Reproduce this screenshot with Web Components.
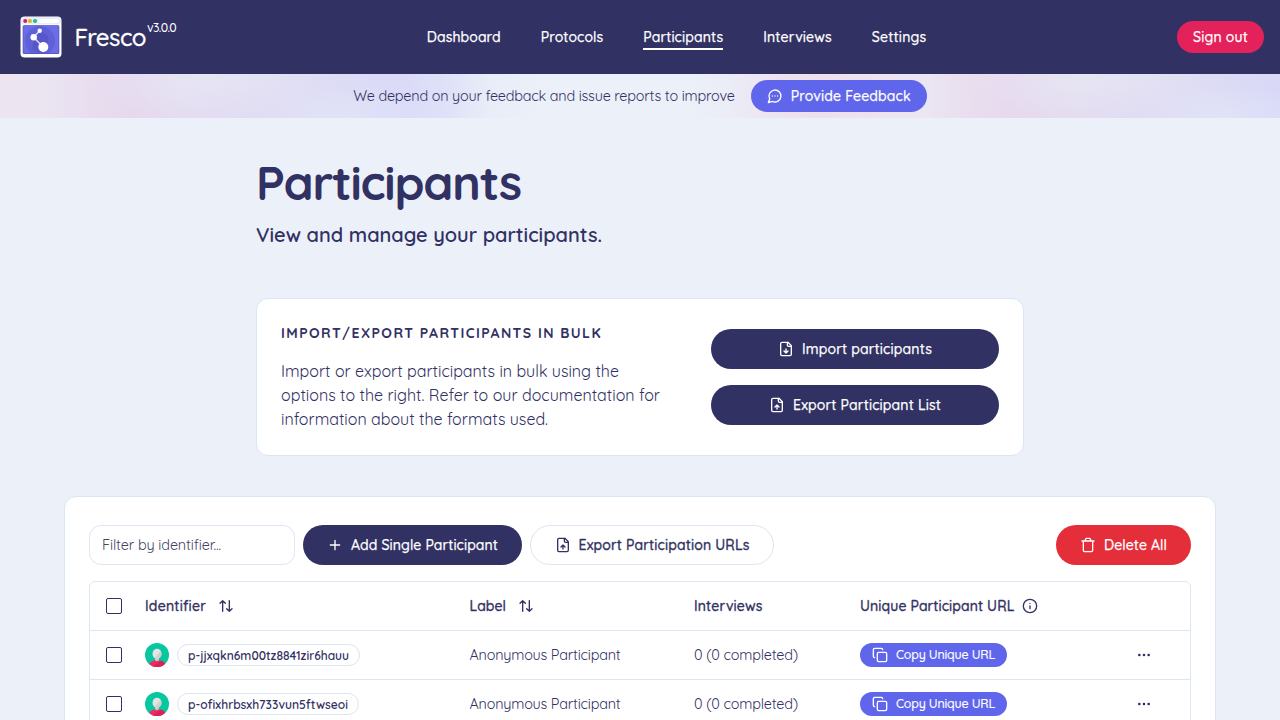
<!DOCTYPE html>
<html lang="en">
<head>
<meta charset="utf-8">
<title>Fresco - Participants</title>
<style>
html,body{margin:0;height:720px;overflow:hidden}
body{background:#ecf1f9;color:#323163;font-family:Quicksand,Lato,"Open Sans",sans-serif;font-size:14px;line-height:20px}
</style>
</head>
<body>
<fresco-app></fresco-app>
<script>
const define=(name,html,init)=>customElements.define(name,class extends HTMLElement{
  constructor(){super();this.attachShadow({mode:'open'});}
  connectedCallback(){
    if(this.ready)return;this.ready=true;
    this.shadowRoot.innerHTML=typeof html==='function'?html(this):html;
    if(init)init(this);
  }
});

const ICONS={
  chat:'<path d="M7.9 20A9 9 0 1 0 4 16.1L2 22Z"/><path d="M8 12h.01M12 12h.01M16 12h.01"/>',
  down:'<path d="M15 2H6a2 2 0 0 0-2 2v16a2 2 0 0 0 2 2h12a2 2 0 0 0 2-2V7Z"/><path d="M14 2v4a2 2 0 0 0 2 2h4M12 18v-6M9 15l3 3 3-3"/>',
  up:'<path d="M15 2H6a2 2 0 0 0-2 2v16a2 2 0 0 0 2 2h12a2 2 0 0 0 2-2V7Z"/><path d="M14 2v4a2 2 0 0 0 2 2h4M12 12v6M15 15l-3-3-3 3"/>',
  plus:'<path d="M5 12h14M12 5v14"/>',
  trash:'<path d="M3 6h18M19 6v14c0 1-1 2-2 2H7c-1 0-2-1-2-2V6M8 6V4c0-1 1-2 2-2h4c1 0 2 1 2 2v2"/>',
  sort:'<path d="m21 16-4 4-4-4M17 20V4M3 8l4-4 4 4M7 4v16"/>',
  info:'<circle cx="12" cy="12" r="10"/><path d="M12 16v-4M12 8h.01"/>',
  copy:'<rect width="14" height="14" x="8" y="8" rx="2"/><path d="M4 16c-1.100 0-2-.9-2-2V4c0-1.100.9-2 2-2h10c1.100 0 2 .9 2 2"/>',
  more:'<g fill="currentColor"><circle cx="5" cy="12" r="1"/><circle cx="12" cy="12" r="1"/><circle cx="19" cy="12" r="1"/></g>'
};
define('ui-icon',el=>`<style>:host{display:block;flex:none;width:16px;height:16px}svg{display:block;width:100%;height:100%}</style>
<svg viewBox="0 0 24 24" fill="none" stroke="currentColor" stroke-width="2" stroke-linecap="round" stroke-linejoin="round">${ICONS[el.getAttribute('name')]}</svg>`);

/* One line of text, tracked so that it spans the width given in "w". */
define('fit-text','<style>:host{display:block;flex:none;white-space:nowrap}span{display:inline-block}</style><span><slot></slot></span>',el=>{
  const w=+el.getAttribute('w'),s=el.shadowRoot.querySelector('span');
  el.style.width=w+'px';
  s.style.letterSpacing='0px';
  const n=el.textContent.length;
  s.style.letterSpacing=((w-s.getBoundingClientRect().width)/n).toFixed(3)+'px';
});

define('ui-button',el=>`<style>
:host{display:flex;box-sizing:border-box;flex:none;align-items:center;justify-content:center;gap:8px;height:40px;padding:0 24px;border-radius:20px;background:#323163;color:#fff;font-weight:500;-webkit-text-stroke:.25px}
:host([kind=outline]){background:#fff;color:#323163;border:1px solid #dae6f1;-webkit-text-stroke:.35px}
:host([kind=danger]){background:#e42e3a}
:host([kind=sign]){background:#e3215b}
:host([kind=accent]),:host([size=xs]){background:#6066eb}
:host([size=sm]){height:32px;padding:0 16px}
:host([size=xs]){height:24px;padding:0 12px;font-size:12.4px;-webkit-text-stroke:.15px}
</style>${el.hasAttribute('icon')?`<ui-icon name="${el.getAttribute('icon')}"></ui-icon>`:''}<slot></slot>`);

define('fresco-logo',`<style>:host{display:block;width:42px;height:42px}svg{display:block}</style>
<svg width="42" height="42" viewBox="0 0 42 42"><defs><clipPath id="s"><rect x="3" y="9.500" width="36" height="28.500" rx="1"/></clipPath></defs>
<rect x=".5" y=".5" width="41" height="41" rx="4" fill="#fff"/><rect x="1" y="1" width="40" height="7.500" rx="3" fill="#e9edf7"/><rect x="18" y="3" width="21" height="4" rx="2" fill="#fff"/>
<circle cx="5.200" cy="5" r="2" fill="#da1b5c"/><circle cx="10" cy="5" r="2" fill="#e5b31c"/><circle cx="15" cy="5" r="2" fill="#15bd8b"/>
<g clip-path="url(#s)"><path fill="#6b6de8" d="M3 9h36v30H3z"/><circle cx="20" cy="25" r="15" fill="#6060d8"/><path d="m20 14 8 6v9l-8 8-8-4 2-12z" fill="#5856cb"/></g>
<rect x="3" y="9.500" width="36" height="28" rx="1" fill="none" stroke="#4c4bad" stroke-width=".6"/>
<path d="m19.500 15-6 6.300L23.300 31" fill="none" stroke="#d7dbfa" stroke-width="1.500"/><g fill="#fff"><circle cx="19.700" cy="14.800" r="2.200"/><circle cx="13.700" cy="21.200" r="3.200"/><circle cx="23.300" cy="31" r="5"/></g></svg>`);

define('site-header',`<style>
:host{display:flex;box-sizing:border-box;height:74px;padding:0 16px 0 20px;align-items:center;justify-content:space-between;background:#323163;color:#fff}
.brand{display:flex;align-items:center}.name{font-size:24px;line-height:30px;font-weight:500;margin-left:12.500px;-webkit-text-stroke:.3px}
.v{font-size:12.3px;font-weight:500;margin:0 0 19px 1px}nav{display:flex;gap:40px;font-weight:500;-webkit-text-stroke:.25px}
.on{border-bottom:2px solid #fff;margin-bottom:-2px}
nav>*{padding:1px 0}
</style>
<div class="brand"><fresco-logo></fresco-logo><fit-text class="name" w="71.500">Fresco</fit-text><fit-text class="v" w="29">v3.0.0</fit-text></div>
<nav><fit-text w="74">Dashboard</fit-text><fit-text w="62.500">Protocols</fit-text><fit-text class="on" w="80">Participants</fit-text><fit-text w="68.500">Interviews</fit-text><fit-text w="54.500">Settings</fit-text></nav>
<ui-button kind="sign" size="sm"><fit-text w="55">Sign out</fit-text></ui-button>`);

define('feedback-banner',`<style>
:host{display:flex;height:44px;align-items:center;justify-content:center;gap:16px;font-size:14.4px;
background:radial-gradient(ellipse 120px 46px at 205px 0,#e8eaf5b0,#e8eaf500),radial-gradient(ellipse 120px 46px at 1085px 0,#e8eaf5b0,#e8eaf500),radial-gradient(ellipse 90px 34px at 345px 44px,#e3e6f8b0,#e3e6f800),radial-gradient(ellipse 90px 34px at 1225px 44px,#e3e6f8b0,#e3e6f800),linear-gradient(90deg,#ede4f0 0,#ebe5f2 40px,#e9e1f1 70px,#e8dcef 100px,#e6d9ef 135px,#e4dcf1 180px,#e2dcf2 240px,#dfddf5 310px,#dbdbf7 380px,#dbdbf8 410px,#e0e2f8 450px,#e8edf8 490px,#ecf1f9 560px,#ecf1f9 680px,#ebedf7 725px,#ece4f1 775px,#eee0ec 820px,#ede4f0 880px,#eae6f2 925px,#e9dfef 965px,#e7d9ef 1010px,#e4dcf0 1060px,#e2dcf2 1120px,#dfddf4 1190px,#d9d9f7 1270px)}
ui-button{font-size:14px}
</style><fit-text w="381.500">We depend on your feedback and issue reports to improve</fit-text><ui-button size="sm" kind="accent" icon="chat"><fit-text w="120">Provide Feedback</fit-text></ui-button>`);

define('page-heading',`<style>
:host{display:block;width:768px;margin:0 auto;padding-top:34px;height:146px}
.t{font-size:48px;line-height:60px;font-weight:700}.s{font-size:20px;line-height:28px;font-weight:600;margin-top:9px}
</style><fit-text class="t" w="265">Participants</fit-text><fit-text class="s" w="346">View and manage your participants.</fit-text>`);

define('bulk-card',`<style>
:host{display:flex;box-sizing:border-box;width:768px;height:158px;margin:0 auto;padding:24px;border:1px solid #dae6f1;border-radius:12px;background:#fff;justify-content:space-between;align-items:center}
.h{font-weight:700;margin-bottom:16px}.p{font-size:16px;line-height:24px}.b{display:flex;flex-direction:column;gap:16px;width:288px}
</style><div><fit-text class="h" w="321">IMPORT/EXPORT PARTICIPANTS IN BULK</fit-text>
<fit-text class="p" w="338">Import or export participants in bulk using the</fit-text><fit-text class="p" w="379">options to the right. Refer to our documentation for</fit-text><fit-text class="p" w="267">information about the formats used.</fit-text></div>
<div class="b"><ui-button icon="down"><fit-text w="130">Import participants</fit-text></ui-button><ui-button icon="up"><fit-text w="148">Export Participant List</fit-text></ui-button></div>`);

define('check-box','<style>:host{display:block;box-sizing:border-box;width:16px;height:16px;border:1px solid #323163;border-radius:2px}</style>');

define('user-avatar',`<style>:host{display:block;width:24px;height:24px}svg{display:block}</style>
<svg width="24" height="24" viewBox="0 0 24 24"><defs><clipPath id="c"><circle cx="12" cy="12" r="12"/></clipPath></defs><g clip-path="url(#c)"><path fill="#07c7a0" d="M0 0h24v24H0z"/><path d="M3 24q1-6.500 9-7 8 .5 9 7z" fill="#ef2b60"/><path d="M7 24 16 17.500q5 1.500 5 6.500z" fill="#dc205a"/><path d="M10 13h4v4q-2 2.500-4 0z" fill="#c4ccca"/><ellipse cx="12" cy="10.800" rx="4.500" ry="5" fill="#e4e5e3"/><path d="M15.700 8q2 4-1 6.700-2.600 2-5 0z" fill="#cfd2d0"/></g></svg>`);

define('table-row',`<style>
:host{display:grid;box-sizing:border-box;height:49px;grid-template-columns:39px 324.500px 224.500px 166px 276px 1fr;padding-left:16px;align-items:center;border-bottom:1px solid #dae6f1;font-size:14.4px}
::slotted(*){display:flex;align-items:center}:host([head]){font-weight:500;font-size:14px;-webkit-text-stroke:.35px}
</style><check-box></check-box><slot></slot>`);

define('participant-row',el=>`<style>
:host{display:block}.badge{box-sizing:border-box;height:22px;margin-left:8px;padding:0 10px;border:1px solid #dae6f1;border-radius:11px;font-size:12px;font-weight:600;line-height:21px}
</style><table-row><div><user-avatar></user-avatar><div class="badge"><fit-text w="${el.getAttribute('w')}">${el.getAttribute('pid')}</fit-text></div></div>
<div><fit-text w="151">Anonymous Participant</fit-text></div><div><fit-text w="104">0 (0 completed)</fit-text></div>
<div><ui-button size="xs" icon="copy"><fit-text w="99">Copy Unique URL</fit-text></ui-button></div><div><ui-icon name="more"></ui-icon></div></table-row>`);

define('participants-card',`<style>
:host{display:block;box-sizing:border-box;width:1152px;height:400px;margin:40px auto 0;padding:28px 24px;border:1px solid #dae6f1;border-radius:12px;background:#fff}
.bar{display:flex;gap:8px;margin-bottom:16px}.in{display:flex;box-sizing:border-box;width:206px;height:40px;padding-left:12px;align-items:center;border:1px solid #dae6f1;border-radius:12px;color:#444461;font-size:14.4px}
.end{margin-left:auto}.tbl{border:1px solid #dae6f1;border-radius:6px}.srt{margin-left:12px}.inf{margin-left:8px}
.out{padding:0 23.500px}
</style><div class="bar"><div class="in"><fit-text w="119">Filter by identifier...</fit-text></div>
<ui-button icon="plus"><fit-text w="147">Add Single Participant</fit-text></ui-button><ui-button class="out" kind="outline" icon="up"><fit-text w="171">Export Participation URLs</fit-text></ui-button>
<ui-button class="end" kind="danger" icon="trash"><fit-text w="63">Delete All</fit-text></ui-button></div>
<div class="tbl"><table-row head><div><fit-text w="61">Identifier</fit-text><ui-icon class="srt" name="sort"></ui-icon></div><div><fit-text w="36.500">Label</fit-text><ui-icon class="srt" name="sort"></ui-icon></div><div><fit-text w="68.500">Interviews</fit-text></div><div><fit-text w="154.400">Unique Participant URL</fit-text><ui-icon class="inf" name="info"></ui-icon></div></table-row>
<participant-row pid="p-jjxqkn6m00tz8841zir6hauu" w="161"></participant-row><participant-row pid="p-ofixhrbsxh733vun5ftwseoi" w="160"></participant-row></div>`);

define('fresco-app',`<style>:host{display:block;height:720px;overflow:hidden}</style><site-header></site-header><feedback-banner></feedback-banner><page-heading></page-heading><bulk-card></bulk-card><participants-card></participants-card>`);
</script>
</body>
</html>
